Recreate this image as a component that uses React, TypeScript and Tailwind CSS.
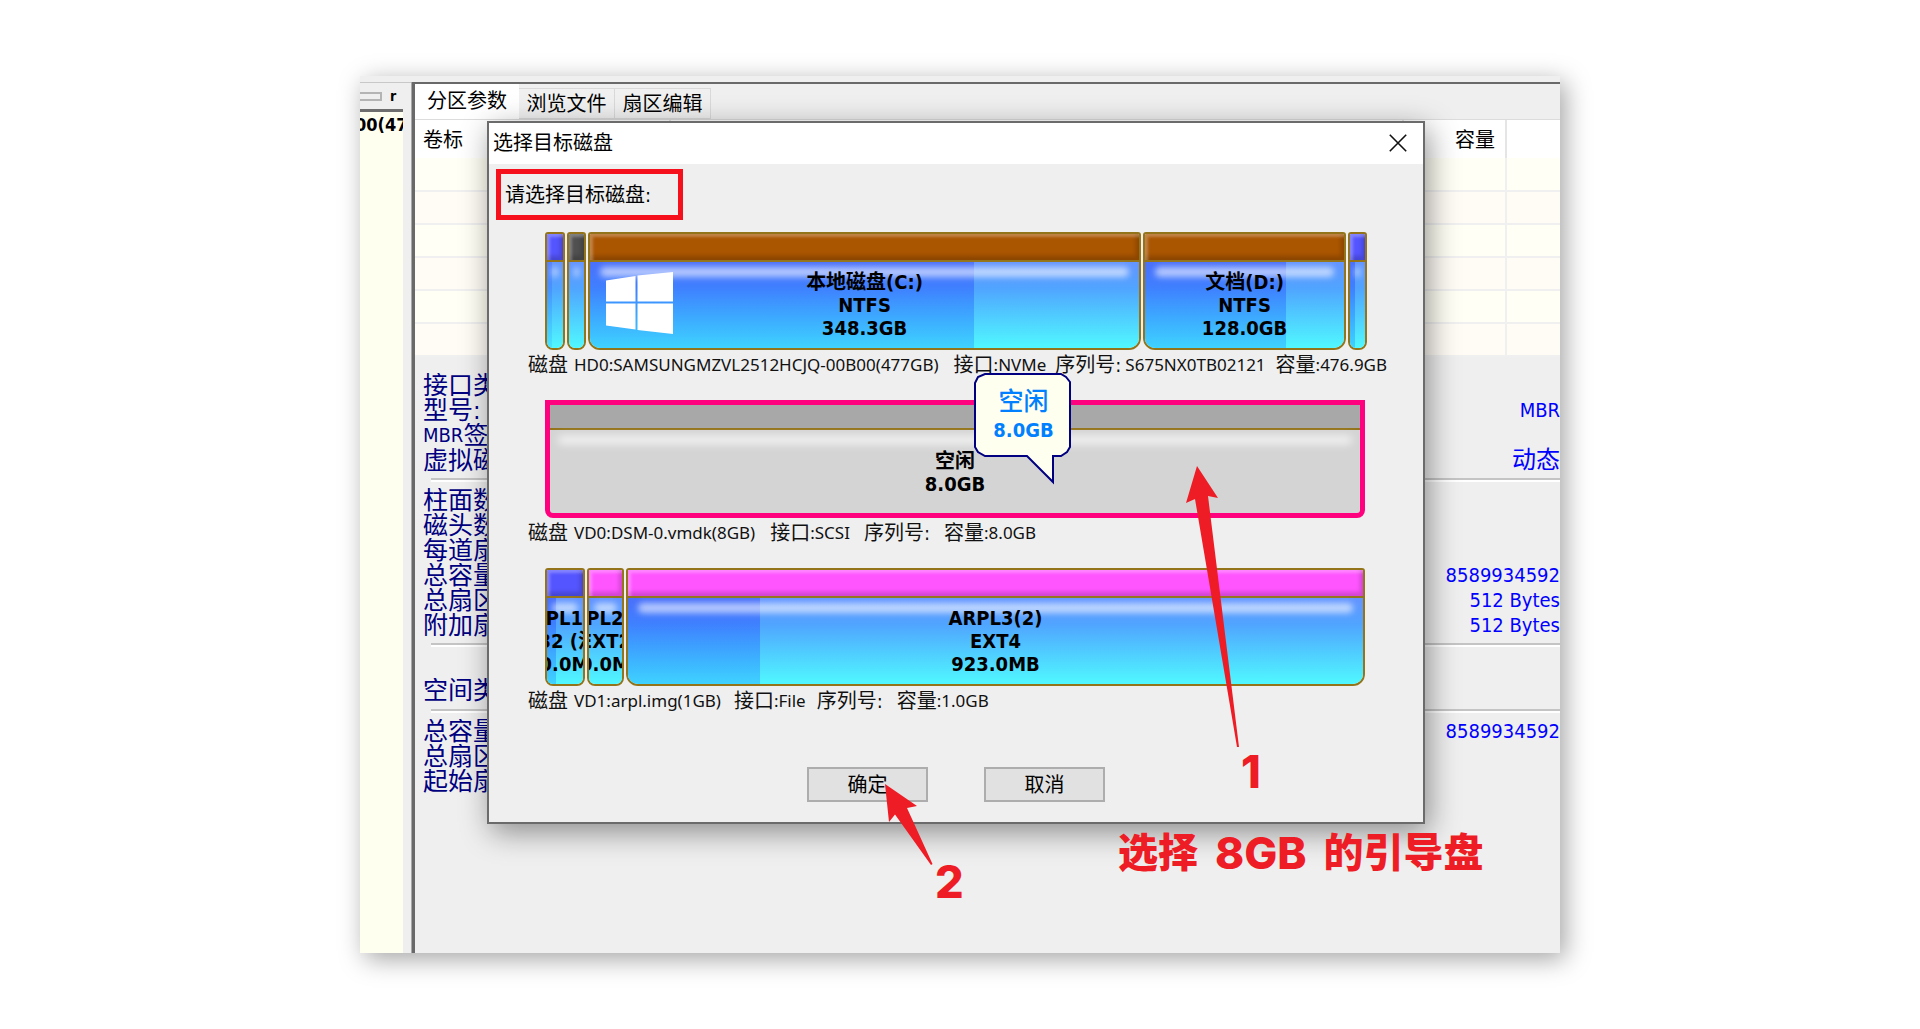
import React from "react";

type Segment = {
  lines: string[];
  width: string;
  head: string;
  used?: string;
  logo?: boolean;
  small?: boolean;
};

type InfoPart = { label: string; value: string; space: string };

function WindowsLogo() {
  return (
    <svg viewBox="0 0 68 62" className="absolute left-[16px] top-[38px] h-[62px] w-[68px]" fill="#ffffff" aria-hidden="true">
      <path d="M0 8.5 L29.5 4 V29.5 H0 Z M31.5 3.6 L67 0 V29.5 H31.5 Z M0 31.5 H29.5 V57.5 L0 53.5 Z M31.5 31.5 H67 V62 L31.5 58 Z" />
    </svg>
  );
}

function SegmentBox({ seg }: { seg: Segment }) {
  return (
    <div
      className={`relative flex h-[118px] flex-col overflow-hidden border-2 border-[#94741a] ${seg.width} ${
        seg.small ? "rounded-t-[3px] rounded-b-[8px]" : "rounded-t-[3px] rounded-b-[12px]"
      }`}
    >
      <div
        className={`h-[28px] shrink-0 border-b-2 border-[#94741a] shadow-[inset_3px_3px_3px_rgba(255,255,255,0.28),inset_-3px_-4px_4px_rgba(0,0,0,0.18)] ${seg.head}`}
      />
      <div className="relative flex-1 bg-linear-to-b from-[#6494ff] via-[#50a4ff] via-30% to-[#50f8ff]">
        {seg.used && (
          <div className={`h-full bg-linear-to-b from-[#4a70fa] via-[#3f80ff] via-30% to-[#3fd2ff] ${seg.used}`} />
        )}
        <div className={`absolute top-[5px] h-[10px] rounded-full bg-white/60 blur-[3px] ${seg.small ? "inset-x-[5px]" : "inset-x-[10px]"}`} />
      </div>
      {seg.logo && <WindowsLogo />}
      {seg.lines.length > 0 && (
        <div className="absolute inset-x-0 top-[37px] flex flex-col items-center text-[20px] leading-[23px] font-bold whitespace-nowrap text-black">
          {seg.lines.map((line) => (
            <span key={line}>{line}</span>
          ))}
        </div>
      )}
    </div>
  );
}

function DiskInfo({ parts }: { parts: InfoPart[] }) {
  return (
    <p className="flex h-[30px] items-center text-[17px] whitespace-nowrap text-[#111]">
      {parts.map((p) => (
        <span key={p.label} className={`flex items-center ${p.space}`}>
          <span className="text-[20px]">{p.label}</span>
          <span className="font-['Noto_Sans','Noto_Sans_CJK_SC',sans-serif]">{p.value}</span>
        </span>
      ))}
    </p>
  );
}

function Tooltip() {
  return (
    <div className="absolute -top-[27px] left-[429px] z-10 h-[112px] w-[99px]">
      <svg viewBox="0 0 99 112" className="absolute inset-0 h-full w-full" aria-hidden="true">
        <path
          d="M11 1 H87 L92 4 L96 9 V74 L93 79 L87 83 H79 V109 L53 83 H11 L4 79 L1 74 V10 L4 4 Z"
          fill="#fffff0"
          stroke="#000080"
          strokeWidth="2"
        />
      </svg>
      <div className="relative flex flex-col items-center pt-[15px] text-[#0080ff]">
        <span className="text-[25px] leading-[28px] font-medium">空闲</span>
        <span className="text-[20px] leading-[29px] font-bold">8.0GB</span>
      </div>
    </div>
  );
}

const disk0: Segment[] = [
  { lines: [], width: "w-[20px]", head: "bg-[#5555ff]", used: "w-[5px] opacity-50", small: true },
  { lines: [], width: "w-[19px]", head: "bg-[#505050]", small: true },
  { lines: ["本地磁盘(C:)", "NTFS", "348.3GB"], width: "min-w-0 flex-[555]", head: "bg-[#aa5500]", used: "w-[70%]", logo: true },
  { lines: ["文档(D:)", "NTFS", "128.0GB"], width: "min-w-0 flex-[201]", head: "bg-[#aa5500]", used: "w-[71%]" },
  { lines: [], width: "w-[19px]", head: "bg-[#5555ff]", used: "w-[5px]", small: true },
];

const disk2: Segment[] = [
  { lines: ["ARPL1(0)", "FAT32 (活动)", "50.0MB"], width: "w-[40px]", head: "bg-[#5555ff]", used: "w-[9px]", small: true },
  { lines: ["ARPL2(1)", "EXT2", "50.0MB"], width: "w-[37px]", head: "bg-[#ff55ff]", small: true },
  { lines: ["ARPL3(2)", "EXT4", "923.0MB"], width: "min-w-0 flex-1", head: "bg-[#ff55ff]", used: "w-[18%]" },
];

const groups: { className: string; rows: [string, string][] }[] = [
  { className: "pt-[16px] pb-[5px]", rows: [["接口类", ""], ["型号:", "MBR"], ["MBR签", ""], ["虚拟磁", "动态"]] },
  {
    className: "pt-[8px] pb-[5px]",
    rows: [["柱面数", ""], ["磁头数", ""], ["每道扇", ""], ["总容量", "8589934592"], ["总扇区", "512 Bytes"], ["附加扇", "512 Bytes"]],
  },
  { className: "pt-[33px] pb-[6px]", rows: [["空间类", ""]] },
  { className: "pt-[8px] pb-[159px]", rows: [["总容量", "8589934592"], ["总扇区", ""], ["起始扇", ""]] },
];

function Label({ text }: { text: string }) {
  const latin = text.startsWith("MBR") ? "MBR" : "";
  return (
    <span className="flex w-[74px] items-center overflow-hidden text-[25px] text-[#000080]">
      {latin && <span className="text-[20px]">{latin}</span>}
      {text.slice(latin.length)}
    </span>
  );
}

function MainPane() {
  return (
    <section className="min-w-0 flex-1 overflow-hidden border-t-2 border-l-[3px] border-[#696969] bg-[#efefef]">
      <div role="tablist" className="flex h-[36px] items-end border-b border-[#dcdcdc] text-[20px] text-black">
        <button role="tab" aria-selected="true" className="h-[35px] w-[104px] bg-white pb-[2px]">分区参数</button>
        <button role="tab" aria-selected="false" className="h-[31px] w-[96px] border border-l-0 border-[#d9d9d9] bg-[#f0f0f0]">浏览文件</button>
        <button role="tab" aria-selected="false" className="h-[31px] w-[96px] border border-l-0 border-[#d9d9d9] bg-[#f0f0f0]">扇区编辑</button>
      </div>
      <table className="w-full table-fixed border-collapse">
        <thead>
          <tr className="h-[38px] bg-white text-left text-[20px] text-black">
            <th className="w-[255px] border-r-2 border-[#e5e5e5] pt-[2px] pl-[8px] font-normal">卷标</th>
            <th className="border-r-2 border-[#e5e5e5]" />
            <th className="w-[103px] border-r-2 border-[#e5e5e5] pt-[2px] pr-[10px] text-right font-normal">容量</th>
            <th className="w-[54px]" />
          </tr>
        </thead>
        <tbody>
          {[0, 1, 2, 3, 4, 5].map((n) => (
            <tr key={n} className="h-[33px] border-b-2 border-[#f0f0f0] odd:bg-[#fffff5] even:bg-[#fffbf5]">
              <td />
              <td />
              <td className="border-r-2 border-[#f0f0f0]" />
              <td />
            </tr>
          ))}
        </tbody>
      </table>
      {groups.map((g, i) => (
        <div key={i}>
          {i > 0 && <hr className="ml-[16px] h-[2px] border-0 border-t-2 border-[#c4c4c4] shadow-[0_2px_0_#ffffff]" />}
          <dl className={`pl-[8px] ${g.className}`}>
            {g.rows.map(([k, v]) => (
              <div key={k} className="flex h-[25px] items-center justify-between whitespace-nowrap">
                <dt className="leading-[25px]"><Label text={k} /></dt>
                <dd className={`leading-[25px] text-[#0000ff] ${v === "动态" ? "text-[24px]" : "text-[20px]"}`}>{v}</dd>
              </div>
            ))}
          </dl>
        </div>
      ))}
    </section>
  );
}

function SidePane() {
  return (
    <aside className="flex w-[52px] flex-col border-r border-[#a8a8a8] bg-[#efefef]">
      <div className="flex h-[27px] items-center gap-[8px] border-t border-[#c8c8c8]">
        <span className="h-[9px] w-[22px] border-y-2 border-r-2 border-[#b4b4b4]" />
        <span className="text-[14px] leading-none font-bold text-black">r</span>
      </div>
      <div className="mr-[8px] flex-1 overflow-hidden border-t-[3px] border-[#6e6e6e] bg-[#fffff0] pt-[2px]">
        <span className="-ml-[5px] block text-[18px] leading-[22px] font-bold whitespace-nowrap text-black">00(47</span>
      </div>
    </aside>
  );
}

function DiskDialog() {
  return (
    <div
      role="dialog"
      aria-labelledby="dialog-title"
      className="absolute top-[45px] right-[135px] left-[127px] border-2 border-[#6b6b6b] bg-[#efefef] shadow-[4px_8px_28px_rgba(0,0,0,0.42)]"
    >
      <header className="flex h-[41px] items-center justify-between bg-white pr-[16px] pb-[2px] pl-[4px]">
        <h1 id="dialog-title" className="text-[20px] leading-none text-black">选择目标磁盘</h1>
        <button aria-label="关闭" className="p-0">
          <svg viewBox="0 0 18 18" className="h-[18px] w-[18px]" stroke="#111111" strokeWidth="1.6" aria-hidden="true">
            <path d="M0.8 0.8 L17.2 17.2 M17.2 0.8 L0.8 17.2" />
          </svg>
        </button>
      </header>
      <div className="pt-[5px] pb-[20px] pl-[7px]">
        <p className="flex h-[51px] w-[187px] items-center border-[5px] border-[#f5101c] pl-[4px] text-[20px] text-black">
          请选择目标磁盘:
        </p>
        <div className="mt-[12px] flex flex-col gap-[20px] pr-[56px] pl-[32px]">
          <div>
            <div className="ml-[17px] flex gap-[2px]">
              {disk0.map((s, i) => <SegmentBox key={i} seg={s} />)}
            </div>
            <DiskInfo
              parts={[
                { label: "磁盘", value: "HD0:SAMSUNGMZVL2512HCJQ-00B00(477GB)", space: "gap-[6px]" },
                { label: "接口", value: ":NVMe", space: "ml-[15px]" },
                { label: "序列号:", value: "S675NX0TB02121", space: "ml-[9px] gap-[4px]" },
                { label: "容量", value: ":476.9GB", space: "ml-[10px]" },
              ]}
            />
          </div>
          <div>
            <div className="relative mr-[2px] ml-[17px]">
              <div className="relative flex h-[118px] flex-col rounded-b-[8px] border-[5px] border-[#ff007f] bg-[#d4d4d4]">
                <div className="h-[25px] border-b-2 border-[#94741a] bg-[#a8a8a8]" />
                <div className="mx-[8px] mt-[6px] h-[8px] rounded-full bg-white/75 blur-[4px]" />
                <div className="absolute inset-x-0 top-[45px] flex flex-col items-center text-[20px] leading-[23px] font-bold text-black">
                  <span>空闲</span>
                  <span>8.0GB</span>
                </div>
              </div>
              <Tooltip />
            </div>
            <DiskInfo
              parts={[
                { label: "磁盘", value: "VD0:DSM-0.vmdk(8GB)", space: "gap-[6px]" },
                { label: "接口", value: ":SCSI", space: "ml-[15px]" },
                { label: "序列号:", value: "", space: "ml-[14px]" },
                { label: "容量", value: ":8.0GB", space: "ml-[14px]" },
              ]}
            />
          </div>
          <div>
            <div className="mr-[2px] ml-[17px] flex gap-[2px]">
              {disk2.map((s, i) => <SegmentBox key={i} seg={s} />)}
            </div>
            <DiskInfo
              parts={[
                { label: "磁盘", value: "VD1:arpl.img(1GB)", space: "gap-[6px]" },
                { label: "接口", value: ":File", space: "ml-[13px]" },
                { label: "序列号:", value: "", space: "ml-[11px]" },
                { label: "容量", value: ":1.0GB", space: "ml-[14px]" },
              ]}
            />
          </div>
        </div>
        <div className="mt-[51px] flex justify-center gap-[56px] pr-[7px]">
          <button className="h-[35px] w-[121px] border-2 border-[#adadad] bg-[#e1e1e1] text-[20px] leading-none text-black">确定</button>
          <button className="h-[35px] w-[121px] border-2 border-[#adadad] bg-[#e1e1e1] text-[20px] leading-none text-black">取消</button>
        </div>
      </div>
    </div>
  );
}

function Annotations() {
  return (
    <div className="pointer-events-none font-['Inter','Noto_Sans_CJK_SC',sans-serif] font-black text-[#ee1c25]">
      <svg viewBox="0 0 54 282" className="absolute top-[390px] left-[826px] h-[282px] w-[54px]" fill="#ee1c25" aria-hidden="true">
        <path d="M11 0 L32 32 L22 30 L53 281 L51 281 L9 33 L0 37 Z" />
      </svg>
      <svg viewBox="0 0 48 82" className="absolute top-[708px] left-[525px] h-[82px] w-[48px]" fill="#ee1c25" aria-hidden="true">
        <path d="M0 0 L32 22 L22 24 L47.500 80 L46 81 L10 30.500 L4 38 Z" />
      </svg>
      <span className="absolute top-[670px] left-[881px] text-[45px] leading-[52px] font-extrabold">1</span>
      <span className="absolute top-[780px] left-[575px] text-[45px] leading-[52px] font-extrabold">2</span>
      <p className="absolute top-[749px] left-[758px] flex items-center gap-[17px] text-[40px] leading-[56px] whitespace-nowrap">
        <span>选择</span>
        <span className="text-[44px] font-extrabold">8GB</span>
        <span>的引导盘</span>
      </p>
    </div>
  );
}

export default function App() {
  return (
    <main className="flex min-h-screen items-center justify-center bg-white font-['DejaVu_Sans_Condensed','Noto_Sans_CJK_SC',sans-serif]">
      <div className="relative w-5/8 shadow-[5px_6px_24px_rgba(0,0,0,0.36)]">
        <div className="overflow-hidden bg-[#efefef] pt-[6px]">
          <div className="flex">
            <SidePane />
            <MainPane />
          </div>
        </div>
        <DiskDialog />
        <Annotations />
      </div>
    </main>
  );
}
